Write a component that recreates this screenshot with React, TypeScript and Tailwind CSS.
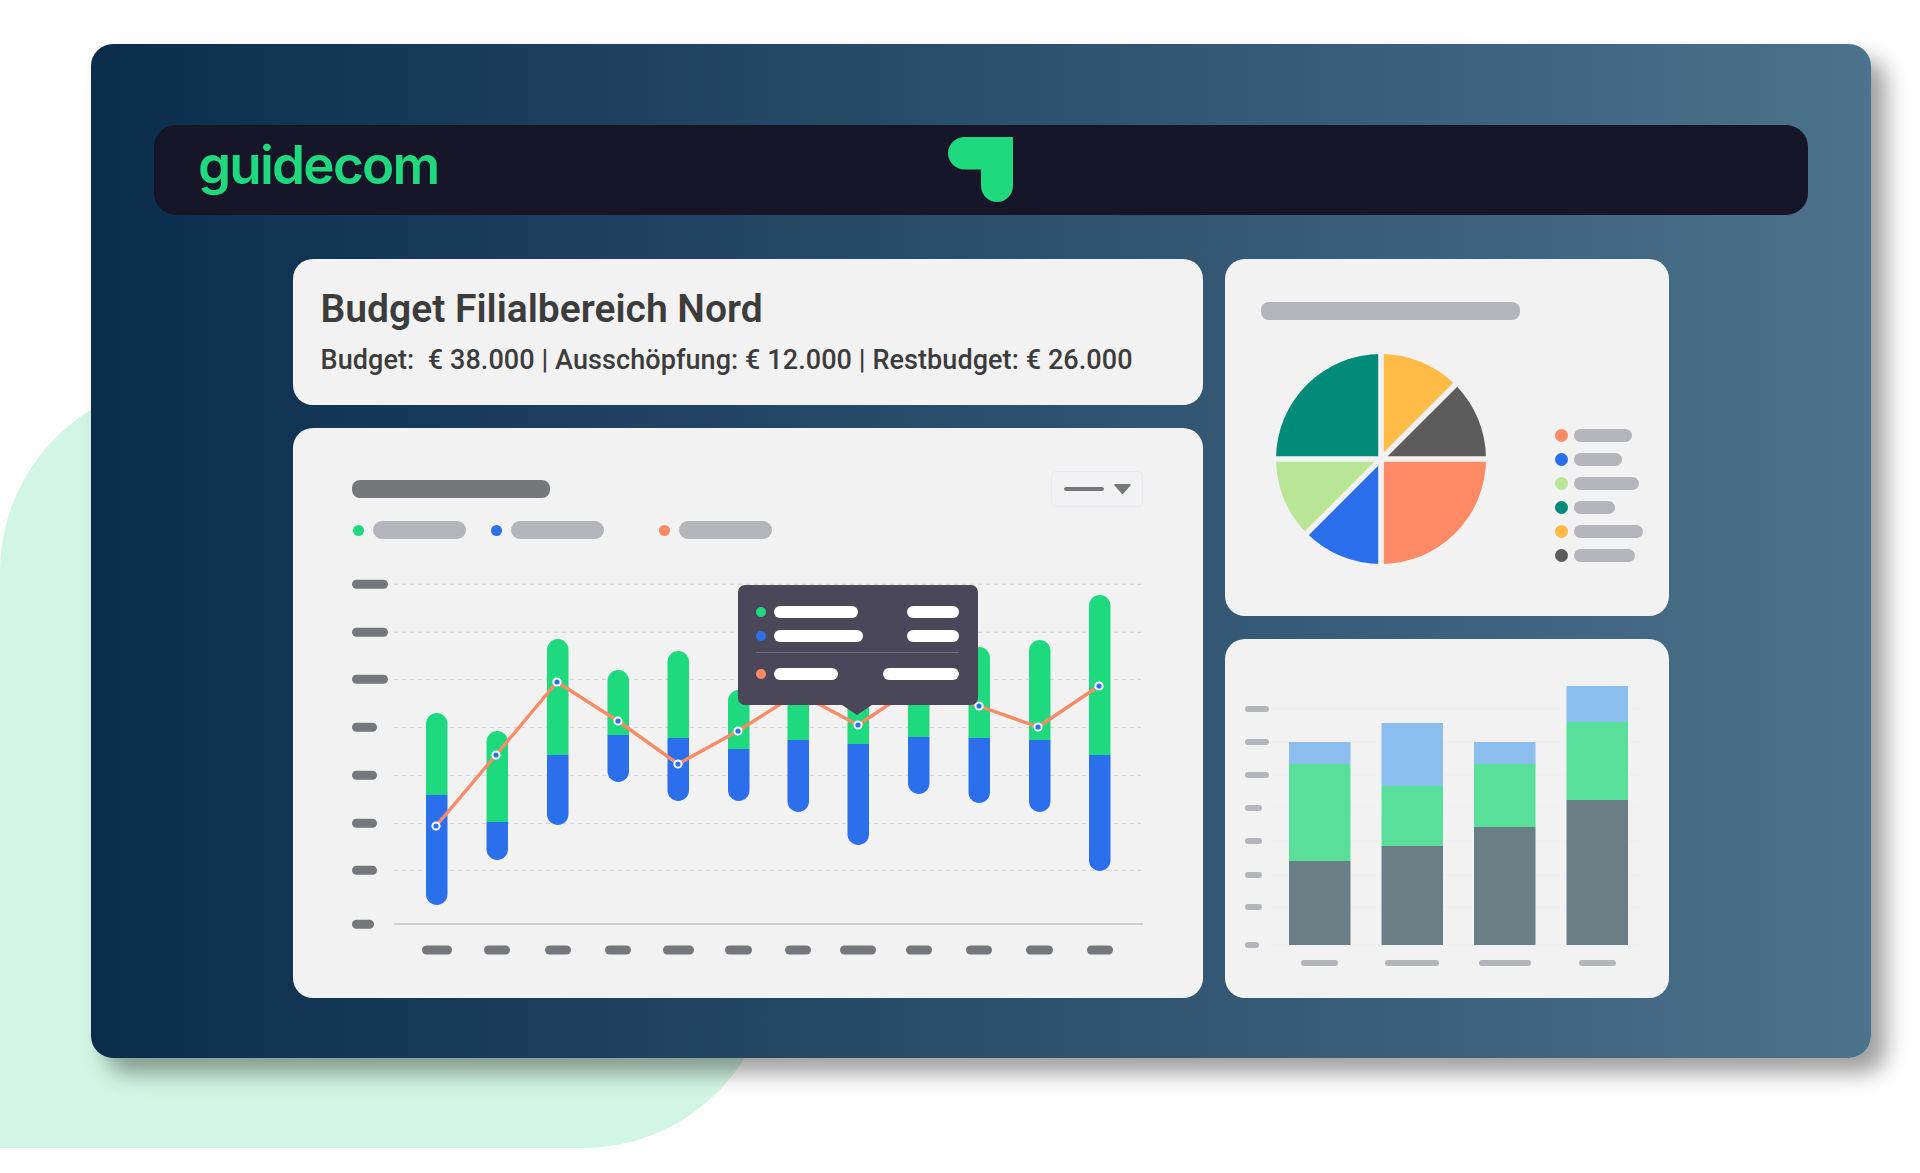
const barData = [
  { x: 426, top: 713, split: 795, bottom: 905 },
  { x: 486.5, top: 731, split: 822, bottom: 860 },
  { x: 547, top: 639, split: 755, bottom: 825 },
  { x: 607.5, top: 670, split: 735, bottom: 782 },
  { x: 667.5, top: 651, split: 738, bottom: 801 },
  { x: 728, top: 690, split: 749, bottom: 801 },
  { x: 787.5, top: 660, split: 740, bottom: 812 },
  { x: 847.5, top: 660, split: 744, bottom: 845 },
  { x: 908, top: 660, split: 737, bottom: 794 },
  { x: 968.5, top: 647, split: 738, bottom: 803 },
  { x: 1029, top: 640, split: 740, bottom: 812 },
  { x: 1089, top: 595, split: 755, bottom: 871 },
];

const linePoints = [
  [436, 826],
  [496, 755],
  [557, 682],
  [618, 721],
  [678, 764],
  [738, 731],
  [798, 693],
  [858, 725],
  [918, 685],
  [979, 706],
  [1038, 727],
  [1099, 686],
];

const yTicks = [
  { y: 584.3, w: 36 },
  { y: 632.3, w: 36 },
  { y: 679.3, w: 36 },
  { y: 727.3, w: 25 },
  { y: 775.3, w: 25 },
  { y: 823.3, w: 25 },
  { y: 870.3, w: 25 },
  { y: 924.3, w: 22 },
];

const xTicks = [
  [422, 452],
  [484, 510],
  [545, 571],
  [605, 631],
  [663, 694],
  [725, 752],
  [785, 811],
  [840, 876],
  [906, 932],
  [966, 992],
  [1026, 1053],
  [1087, 1113],
];

const stackedBars = [
  { x: 1289, top: 742, green: 764, dark: 861 },
  { x: 1381.5, top: 723, green: 786, dark: 846 },
  { x: 1474, top: 742, green: 764, dark: 827 },
  { x: 1566.5, top: 686, green: 722, dark: 800 },
];

const stackedTicks = [
  { y: 709, w: 24 },
  { y: 742, w: 24 },
  { y: 775, w: 24 },
  { y: 808, w: 17 },
  { y: 841, w: 17 },
  { y: 875, w: 17 },
  { y: 907, w: 17 },
  { y: 945, w: 14 },
];

const stackedLabels = [
  [1301, 1338],
  [1385, 1439],
  [1479, 1531],
  [1579, 1616],
];

const pieLegend = [
  { color: "bg-[#ff8a65]", width: "w-[58px]" },
  { color: "bg-[#2b6fec]", width: "w-[48px]" },
  { color: "bg-[#b8e596]", width: "w-[65px]" },
  { color: "bg-[#008a78]", width: "w-[41px]" },
  { color: "bg-[#ffbb45]", width: "w-[69px]" },
  { color: "bg-[#5c5c5c]", width: "w-[61px]" },
];

function Logo() {
  return (
    <div className="relative flex h-[90px] items-center pl-[44px]">
      <span className="-mt-[10px] font-['Inter',sans-serif] text-[53px] font-semibold leading-none tracking-[-1.8px] text-[#1fd97f]">
        guidecom
      </span>
      <svg className="absolute left-[794px] top-[12px]" width="65" height="65" viewBox="0 0 65 65">
        <path
          d="M65 0H17C7.6 0 0 7.3 0 16.2S7.6 32.5 17 32.5H33V48.5C33 57.6 40.2 65 49 65S65 57.6 65 48.5Z"
          fill="#1fd97f"
        />
      </svg>
    </div>
  );
}

function BudgetChart() {
  const r = 10.75;
  return (
    <svg className="mt-[31px] ml-[59px] block" width="800" height="400" viewBox="352 570 800 400">
      {yTicks.slice(0, 7).map((t) => (
        <line key={t.y} x1="394" x2="1141" y1={t.y} y2={t.y} stroke="#cfcfcf" strokeWidth="1" strokeDasharray="4 4" />
      ))}
      <line x1="394" x2="1143" y1="924" y2="924" stroke="#c4c4c4" strokeWidth="1.5" />
      {yTicks.map((t) => (
        <rect key={t.y} x="352" y={t.y - 4.5} width={t.w} height="9" rx="4.5" fill="#75777a" />
      ))}
      {xTicks.map(([a, b]) => (
        <rect key={a} x={a} y="945.5" width={b - a} height="9" rx="4.5" fill="#75777a" />
      ))}
      {barData.map((b) => (
        <g key={b.x}>
          <path
            d={`M${b.x} ${b.split}V${b.top + r}a${r} ${r} 0 0 1 ${r * 2} 0V${b.split}Z`}
            fill="#1fd97f"
          />
          <path
            d={`M${b.x} ${b.split}V${b.bottom - r}a${r} ${r} 0 0 0 ${r * 2} 0V${b.split}Z`}
            fill="#2b6fec"
          />
        </g>
      ))}
      <polyline
        points={linePoints.map((p) => p.join(",")).join(" ")}
        fill="none"
        stroke="#f98b66"
        strokeWidth="3.4"
        strokeLinejoin="round"
      />
      {linePoints.map(([x, y]) => (
        <circle key={x} cx={x} cy={y} r="3.6" fill="#2b6fec" stroke="#ffffff" strokeWidth="2" />
      ))}
    </svg>
  );
}

function Tooltip() {
  return (
    <div className="absolute left-[445px] top-[157px] h-[120px] w-[240px] rounded-[7px] bg-[#4a4858] pl-[18px] pr-[19px] pt-[21px]">
      <div className="flex h-[12px] items-center">
        <div className="h-[10px] w-[10px] rounded-full bg-[#1fd97f]" />
        <div className="ml-[8px] h-[12px] w-[84px] rounded-full bg-white" />
        <div className="ml-auto h-[12px] w-[52px] rounded-full bg-white" />
      </div>
      <div className="mt-[12px] flex h-[12px] items-center">
        <div className="h-[10px] w-[10px] rounded-full bg-[#2b6fec]" />
        <div className="ml-[8px] h-[12px] w-[89px] rounded-full bg-white" />
        <div className="ml-auto h-[12px] w-[52px] rounded-full bg-white" />
      </div>
      <div className="mt-[10px] h-px bg-[#6f6e7b]" />
      <div className="mt-[15px] flex h-[12px] items-center">
        <div className="h-[10px] w-[10px] rounded-full bg-[#ff8a65]" />
        <div className="ml-[8px] h-[12px] w-[64px] rounded-full bg-white" />
        <div className="ml-auto h-[12px] w-[76px] rounded-full bg-white" />
      </div>
      <svg className="absolute left-[104px] top-[120px]" width="30" height="10" viewBox="0 0 30 10">
        <path d="M0 0H30L15 10Z" fill="#4a4858" />
      </svg>
    </div>
  );
}

function PieChart() {
  const c = 105;
  const d = 74.25;
  return (
    <svg className="ml-[15px] mt-[34px] block" width="210" height="210" viewBox="0 0 210 210">
      <path d={`M${c} ${c}V0A${c} ${c} 0 0 0 0 ${c}Z`} fill="#008a78" />
      <path d={`M${c} ${c}V0A${c} ${c} 0 0 1 ${c + d} ${c - d}Z`} fill="#ffbb45" />
      <path d={`M${c} ${c}L${c + d} ${c - d}A${c} ${c} 0 0 1 210 ${c}Z`} fill="#5c5c5c" />
      <path d={`M${c} ${c}H210A${c} ${c} 0 0 1 ${c} 210Z`} fill="#ff8a65" />
      <path d={`M${c} ${c}V210A${c} ${c} 0 0 1 ${c - d} ${c + d}Z`} fill="#2b6fec" />
      <path d={`M${c} ${c}L${c - d} ${c + d}A${c} ${c} 0 0 1 0 ${c}Z`} fill="#b8e596" />
      <g stroke="#f2f2f2" strokeWidth="5.6">
        <line x1={c} y1="-2" x2={c} y2="212" />
        <line x1="-2" y1={c} x2="212" y2={c} />
        <line x1="22" y1="188" x2="188" y2="22" />
      </g>
    </svg>
  );
}

function StackedChart() {
  return (
    <svg className="ml-[15px] block" width="410" height="295" viewBox="1240 680 410 295">
      {stackedTicks.map((t) => (
        <line key={t.y} x1="1274" x2="1644" y1={t.y} y2={t.y} stroke="#ebebeb" strokeWidth="1" strokeDasharray="2 2" />
      ))}
      {stackedTicks.map((t) => (
        <rect key={t.y} x="1245" y={t.y - 3} width={t.w} height="6" rx="3" fill="#b3b5ba" />
      ))}
      {stackedBars.map((b) => (
        <g key={b.x}>
          <rect x={b.x} y={b.top} width="61.5" height={b.green - b.top} fill="#8bbdee" />
          <rect x={b.x} y={b.green} width="61.5" height={b.dark - b.green} fill="#58e09a" />
          <rect x={b.x} y={b.dark} width="61.5" height={945 - b.dark} fill="#697f85" />
        </g>
      ))}
      {stackedLabels.map(([a, c]) => (
        <rect key={a} x={a} y="960" width={c - a} height="6" rx="3" fill="#b3b5ba" />
      ))}
    </svg>
  );
}

export default function App() {
  return (
    <div className="relative h-[1173px] w-full overflow-hidden bg-white pl-[91px] pt-[44px] font-['Roboto',sans-serif]">
      <div className="absolute left-0 top-[382px] h-[766px] w-[773px] rounded-[190px] rounded-bl-none rounded-tr-none bg-[#d2f6e5]" />

      <div className="relative h-[1014px] w-[1780px] rounded-[22px] bg-gradient-to-r from-[#0a2d4c] to-[#4d728c] pt-[81px] shadow-[15px_15px_22px_rgba(0,0,0,0.38)]">
        <div className="mx-[63px] h-[90px] rounded-[22px] bg-[#161628]">
          <Logo />
        </div>

        <div className="ml-[202px] mt-[44px] flex gap-[22px]">
          <div className="flex w-[910px] flex-col gap-[23px]">
            <div className="h-[146px] rounded-[20px] bg-[#f2f2f2] pl-[27.5px] pt-[26px] text-[#3c3c3c]">
              <h1 className="text-[39px] font-semibold leading-[48px]">Budget Filialbereich Nord</h1>
              <p className="mt-[11px] whitespace-pre text-[27px] font-medium leading-[32px] tracking-[0.08px]">
                Budget:  € 38.000 | Ausschöpfung: € 12.000 | Restbudget: € 26.000
              </p>
            </div>

            <div className="relative h-[570px] rounded-[20px] bg-[#f2f2f2]">
              <div className="flex h-[79px] items-center justify-between pl-[59px] pr-[60px] pt-[43px]">
                <div className="h-[18px] w-[198px] rounded-[8px] bg-[#75777a]" />
                <div className="flex h-[36px] w-[92px] items-center rounded-[5px] border border-[#e9ebf3] pl-[12px]">
                  <div className="h-[4px] w-[40px] rounded-full bg-[#75777a]" />
                  <svg className="ml-[10px]" width="17" height="10" viewBox="0 0 17 10">
                    <path d="M1 0H16C17 0 17 1 16.5 1.5L9.5 9.5C9 10 8 10 7.5 9.5L.5 1.5C0 1 0 0 1 0Z" fill="#75777a" />
                  </svg>
                </div>
              </div>
              <div className="mt-[14px] flex h-[18px] items-center pl-[60px]">
                <div className="h-[11px] w-[11px] rounded-full bg-[#1fd97f]" />
                <div className="ml-[9px] h-[18px] w-[93px] rounded-full bg-[#b3b5ba]" />
                <div className="ml-[25px] h-[11px] w-[11px] rounded-full bg-[#2b6fec]" />
                <div className="ml-[9px] h-[18px] w-[93px] rounded-full bg-[#b3b5ba]" />
                <div className="ml-[55px] h-[11px] w-[11px] rounded-full bg-[#ff8a65]" />
                <div className="ml-[9px] h-[18px] w-[93px] rounded-full bg-[#b3b5ba]" />
              </div>
              <BudgetChart />
              <Tooltip />
            </div>
          </div>

          <div className="flex w-[444px] flex-col gap-[23px]">
            <div className="h-[357px] rounded-[20px] bg-[#f2f2f2] pl-[36px] pt-[43px]">
              <div className="h-[18px] w-[259px] rounded-[8px] bg-[#b3b5ba]" />
              <div className="flex">
                <PieChart />
                <div className="ml-[69px] mt-[108.5px] flex flex-col gap-[11.2px]">
                  {pieLegend.map((item) => (
                    <div key={item.width} className="flex h-[13px] items-center">
                      <div className={`h-[13px] w-[13px] rounded-full ${item.color}`} />
                      <div className={`ml-[6px] h-[13px] rounded-full bg-[#b3b5ba] ${item.width}`} />
                    </div>
                  ))}
                </div>
              </div>
            </div>

            <div className="h-[359px] rounded-[20px] bg-[#f2f2f2] pt-[41px]">
              <StackedChart />
            </div>
          </div>
        </div>
      </div>
    </div>
  );
}
